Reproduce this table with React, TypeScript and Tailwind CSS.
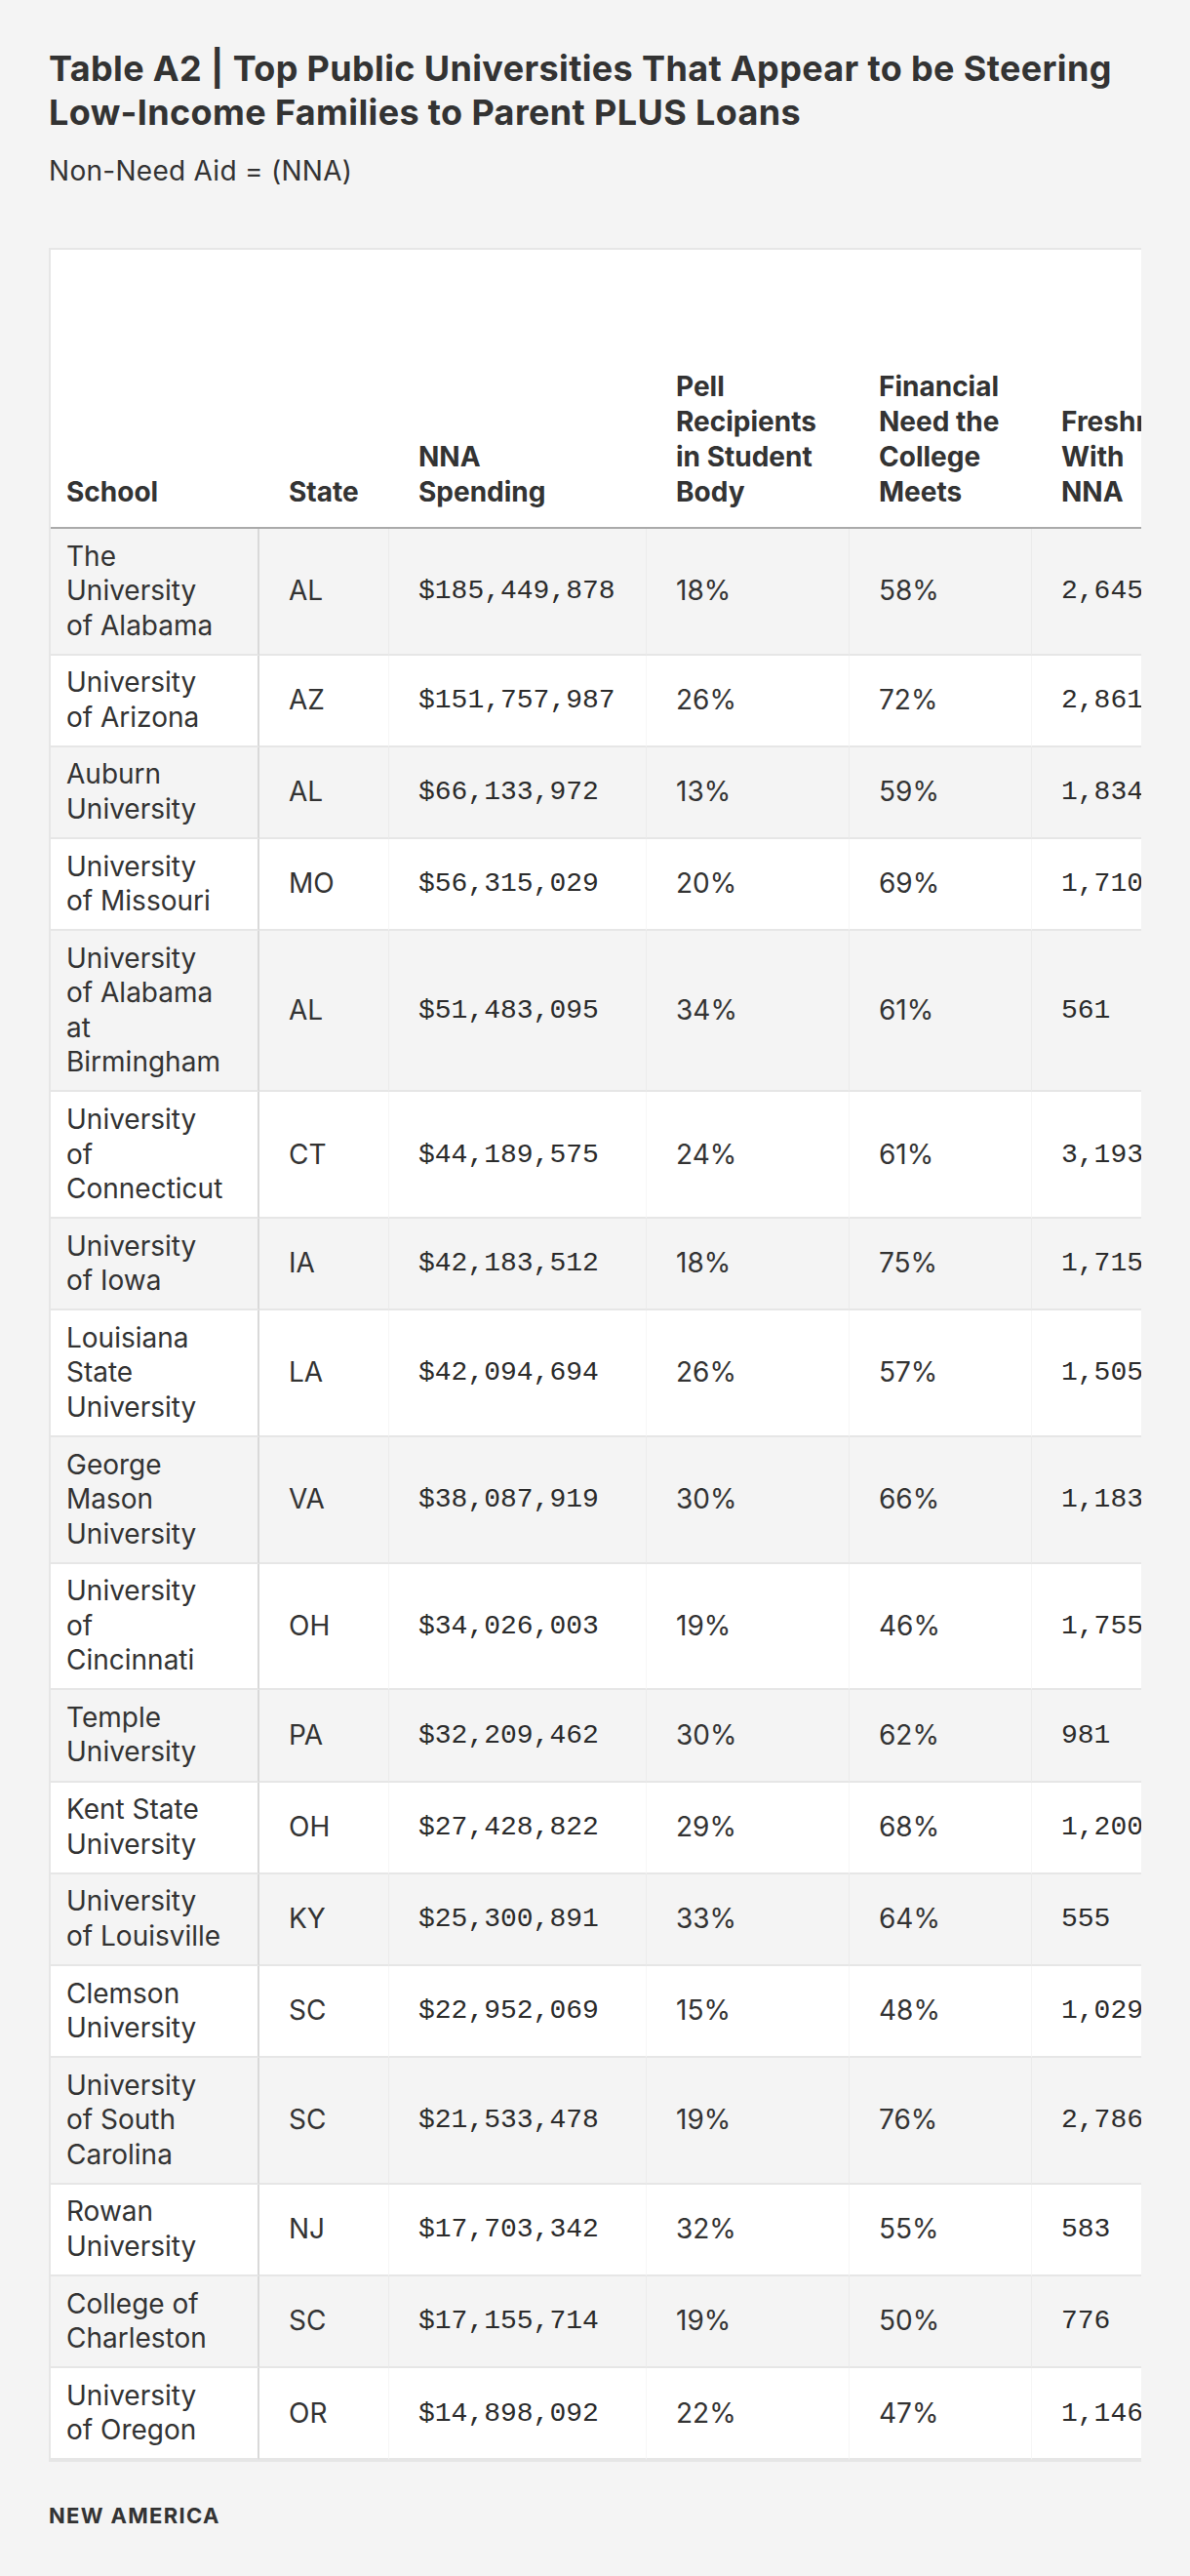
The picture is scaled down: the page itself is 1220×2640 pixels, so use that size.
import React from "react";

type Row = {
  school: string[];
  state: string;
  spending: string;
  pell: string;
  need: string;
  freshmen: string;
};

const rows: Row[] = [
  { school: ["The", "University", "of Alabama"], state: "AL", spending: "$185,449,878", pell: "18%", need: "58%", freshmen: "2,645" },
  { school: ["University", "of Arizona"], state: "AZ", spending: "$151,757,987", pell: "26%", need: "72%", freshmen: "2,861" },
  { school: ["Auburn", "University"], state: "AL", spending: "$66,133,972", pell: "13%", need: "59%", freshmen: "1,834" },
  { school: ["University", "of Missouri"], state: "MO", spending: "$56,315,029", pell: "20%", need: "69%", freshmen: "1,710" },
  { school: ["University", "of Alabama", "at", "Birmingham"], state: "AL", spending: "$51,483,095", pell: "34%", need: "61%", freshmen: "561" },
  { school: ["University", "of", "Connecticut"], state: "CT", spending: "$44,189,575", pell: "24%", need: "61%", freshmen: "3,193" },
  { school: ["University", "of Iowa"], state: "IA", spending: "$42,183,512", pell: "18%", need: "75%", freshmen: "1,715" },
  { school: ["Louisiana", "State", "University"], state: "LA", spending: "$42,094,694", pell: "26%", need: "57%", freshmen: "1,505" },
  { school: ["George", "Mason", "University"], state: "VA", spending: "$38,087,919", pell: "30%", need: "66%", freshmen: "1,183" },
  { school: ["University", "of", "Cincinnati"], state: "OH", spending: "$34,026,003", pell: "19%", need: "46%", freshmen: "1,755" },
  { school: ["Temple", "University"], state: "PA", spending: "$32,209,462", pell: "30%", need: "62%", freshmen: "981" },
  { school: ["Kent State", "University"], state: "OH", spending: "$27,428,822", pell: "29%", need: "68%", freshmen: "1,200" },
  { school: ["University", "of Louisville"], state: "KY", spending: "$25,300,891", pell: "33%", need: "64%", freshmen: "555" },
  { school: ["Clemson", "University"], state: "SC", spending: "$22,952,069", pell: "15%", need: "48%", freshmen: "1,029" },
  { school: ["University", "of South", "Carolina"], state: "SC", spending: "$21,533,478", pell: "19%", need: "76%", freshmen: "2,786" },
  { school: ["Rowan", "University"], state: "NJ", spending: "$17,703,342", pell: "32%", need: "55%", freshmen: "583" },
  { school: ["College of", "Charleston"], state: "SC", spending: "$17,155,714", pell: "19%", need: "50%", freshmen: "776" },
  { school: ["University", "of Oregon"], state: "OR", spending: "$14,898,092", pell: "22%", need: "47%", freshmen: "1,146" },
];

const headers: { lines: string[]; first?: boolean }[] = [
  { lines: ["School"], first: true },
  { lines: ["State"] },
  { lines: ["NNA", "Spending"] },
  { lines: ["Pell", "Recipients", "in Student", "Body"] },
  { lines: ["Financial", "Need the", "College", "Meets"] },
  { lines: ["Freshmen", "With", "NNA"] },
];

const sans = "font-['Inter','Liberation_Sans',sans-serif]";
const mono = "font-['Liberation_Mono','DejaVu_Sans_Mono',monospace]";

function Lines({ lines }: { lines: string[] }) {
  return (
    <>
      {lines.map((l, i) => (
        <span key={i} className="block whitespace-nowrap">
          {l}
        </span>
      ))}
    </>
  );
}

export default function App() {
  return (
    <div className={`min-h-screen bg-[#f4f4f4] text-[#333333] ${sans}`}>
      <div className="px-[50px] pt-[48px] pb-[50px]">
        {/* Title */}
        <h1 className="text-[36px] leading-[45px] font-bold tracking-[0.01em] whitespace-nowrap">
          Table A2 | Top Public Universities That Appear to be Steering
          <br />
          Low-Income Families to Parent PLUS Loans
        </h1>
        <p className="mt-[20px] text-[28px] leading-[35px] tracking-[0.01em]">Non-Need Aid = (NNA)</p>

        {/* Table */}
        <div className="mt-[61px] w-[1120px] overflow-hidden bg-white border-2 border-r-0 border-[#e6e6e6]">
          <table className="table-fixed border-separate border-spacing-0 w-[1260px] text-[28px] leading-[35.5px]">
            <colgroup>
              <col className="w-[214px]" />
              <col className="w-[133px]" />
              <col className="w-[264px]" />
              <col className="w-[208px]" />
              <col className="w-[187px]" />
              <col className="w-[254px]" />
            </colgroup>
            <thead>
              <tr>
                {headers.map((h, i) => (
                  <th
                    key={i}
                    className={`h-[286px] align-bottom text-left font-bold leading-[36px] pb-[18px] border-b-2 border-[#aaaaaa] ${
                      h.first ? "pl-4 pr-4" : "pl-[30px] pr-4"
                    }`}
                  >
                    <Lines lines={h.lines} />
                  </th>
                ))}
              </tr>
            </thead>
            <tbody>
              {rows.map((r, i) => (
                <tr key={i} className={i % 2 === 0 ? "bg-[#f4f4f4]" : "bg-white"}>
                  <td className="pl-4 pr-4 py-[10.6px] align-top border-b-2 border-b-[#e6e6e6] border-r-2 border-r-[#d9d9d9]">
                    <Lines lines={r.school} />
                  </td>
                  <td className="pl-[30px] pr-4 py-[10.6px] align-middle border-b-2 border-b-[#e6e6e6] border-r border-r-black/[0.035]">
                    {r.state}
                  </td>
                  <td className={`pl-[30px] pr-4 py-[10.6px] align-middle whitespace-nowrap text-[#2b2b2b] border-b-2 border-b-[#e6e6e6] border-r border-r-black/[0.035] ${mono}`}>
                    {r.spending}
                  </td>
                  <td className="pl-[30px] pr-4 py-[10.6px] align-middle border-b-2 border-b-[#e6e6e6] border-r border-r-black/[0.035]">
                    {r.pell}
                  </td>
                  <td className="pl-[30px] pr-4 py-[10.6px] align-middle border-b-2 border-b-[#e6e6e6] border-r border-r-black/[0.035]">
                    {r.need}
                  </td>
                  <td className={`pl-[30px] pr-4 py-[10.6px] align-middle whitespace-nowrap text-[#2b2b2b] border-b-2 border-b-[#e6e6e6] ${mono}`}>
                    {r.freshmen}
                  </td>
                </tr>
              ))}
            </tbody>
          </table>
        </div>

        {/* Footer */}
        <div className="mt-[42px] text-[22px] leading-[26px] font-bold tracking-[0.06em]">NEW AMERICA</div>
      </div>
    </div>
  );
}
